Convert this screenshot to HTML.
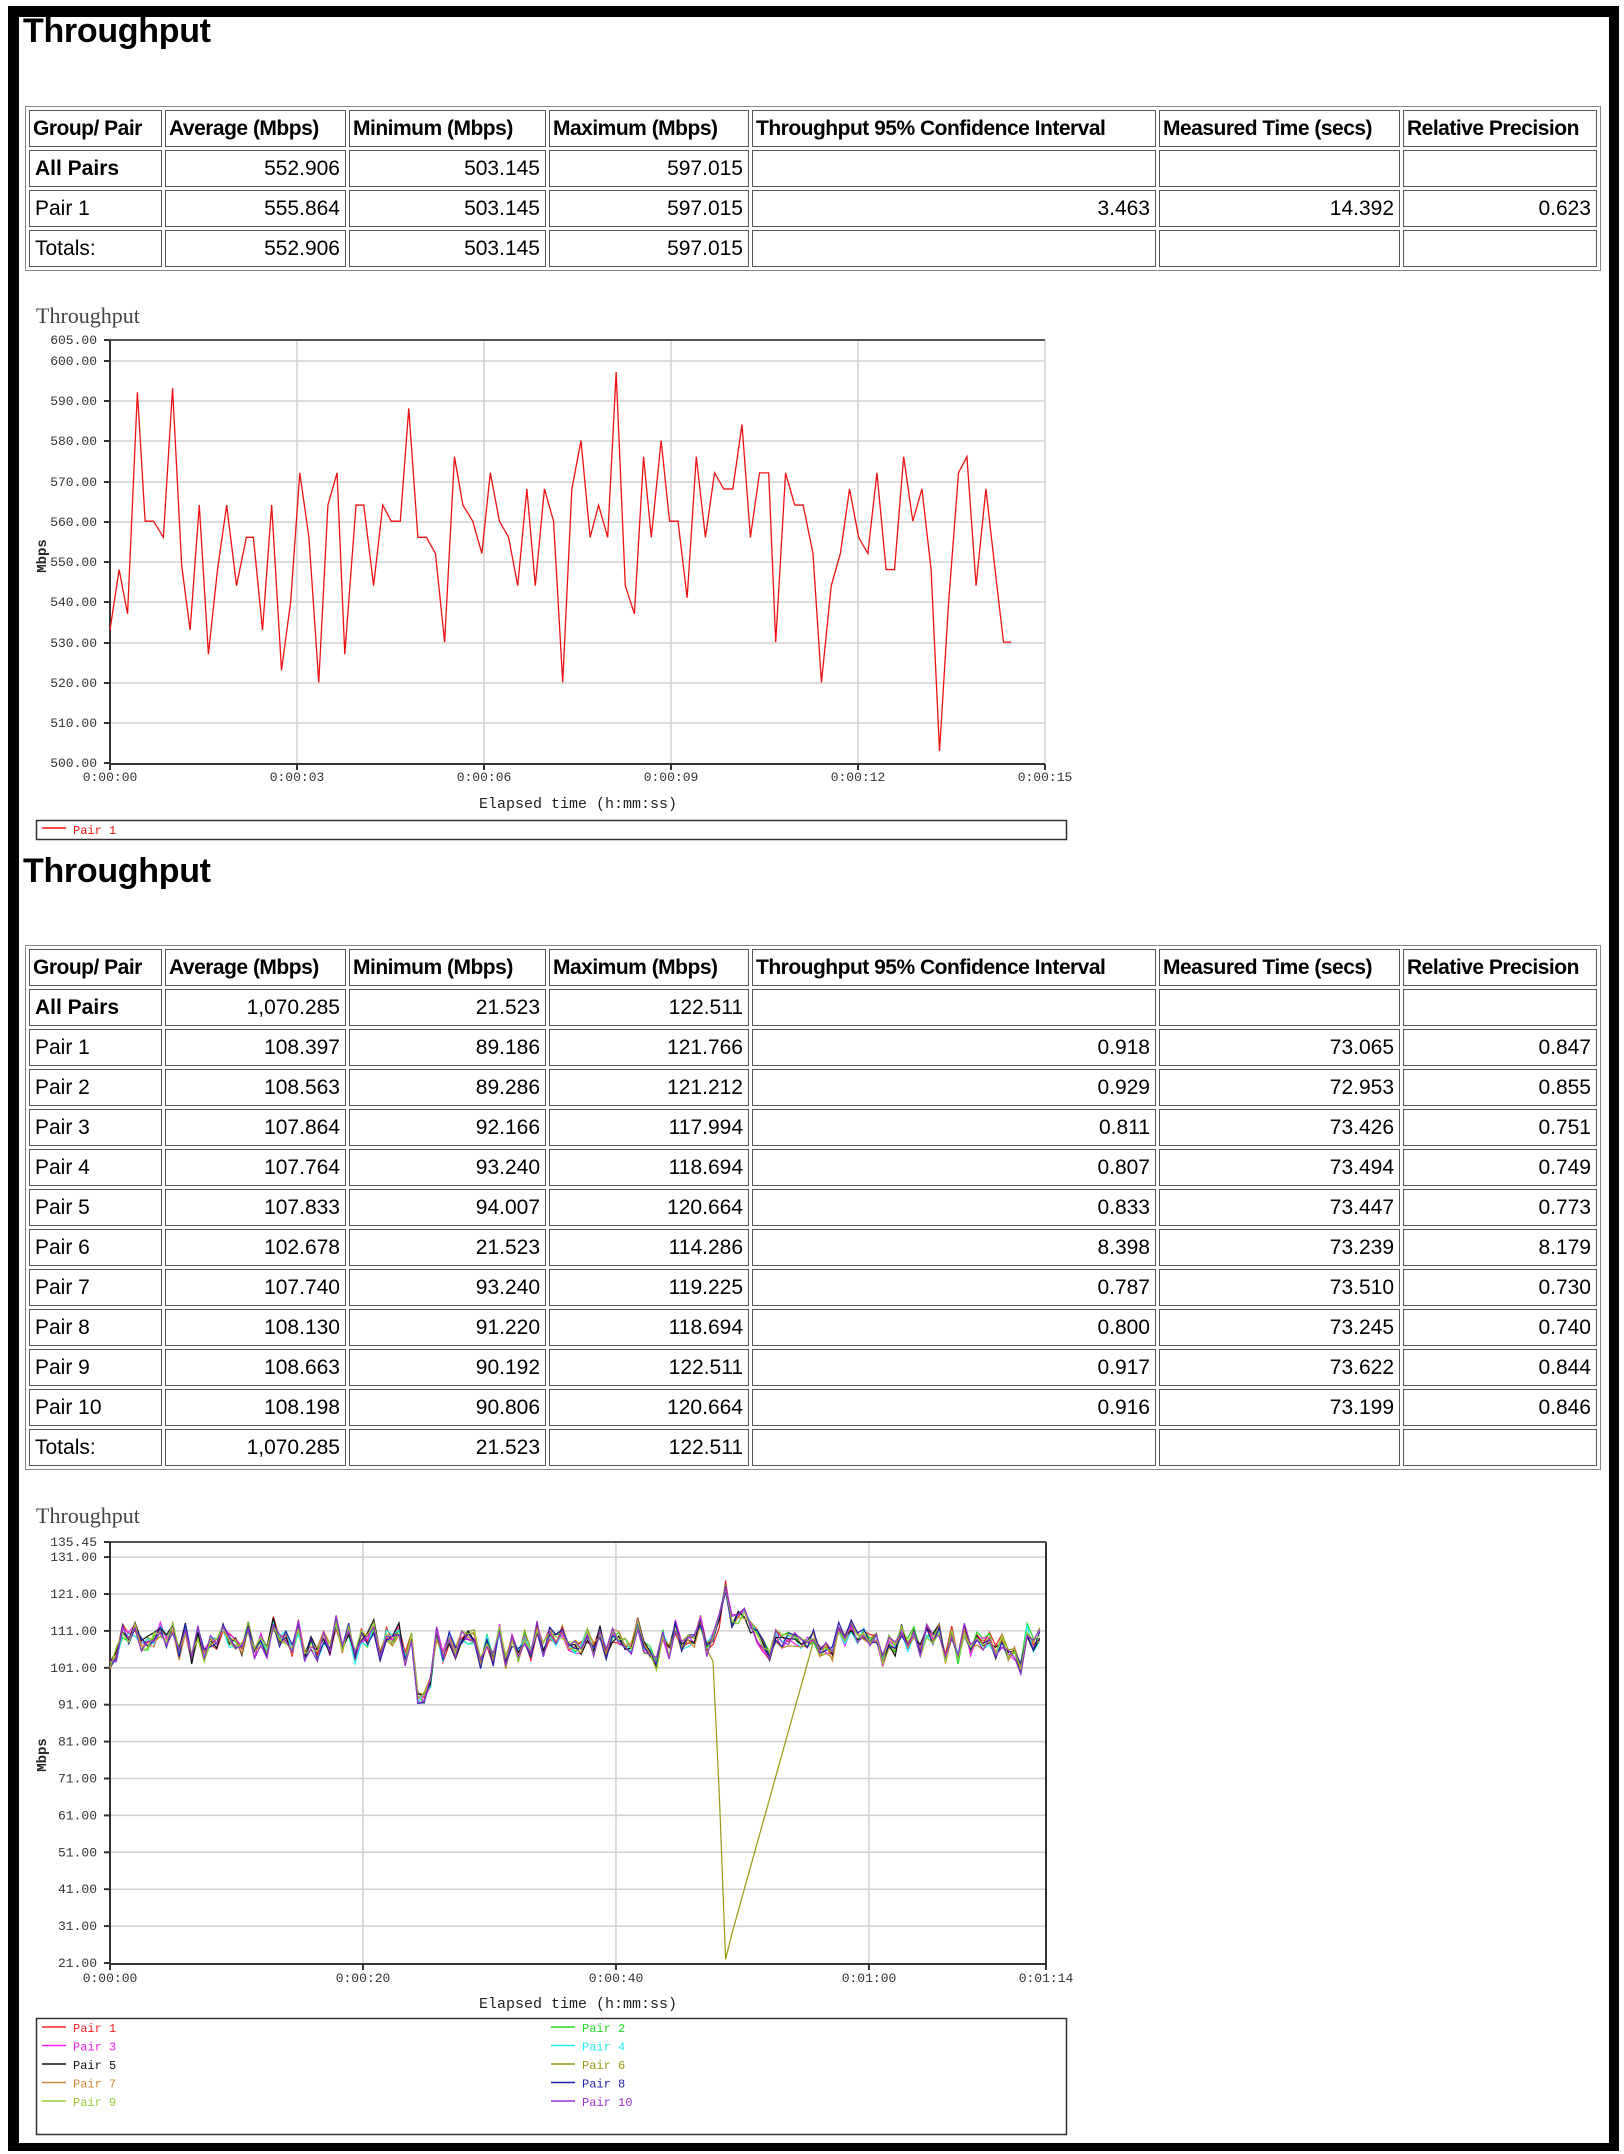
<!DOCTYPE html>
<html><head><meta charset="utf-8">
<style>
html,body{margin:0;padding:0;background:#fff;}
body{width:1624px;height:2154px;position:relative;overflow:hidden;font-family:"Liberation Sans",sans-serif;}
#frame{position:absolute;left:8px;top:6px;width:1590px;height:2126px;border:11px solid #000;border-right-width:10px;border-bottom-width:8px;}
h1{position:absolute;left:23px;margin:0;font-size:34px;font-weight:bold;line-height:40px;letter-spacing:-0.3px;}
table{position:absolute;left:25px;width:1576px;border-collapse:separate;border-spacing:3px;border:1px solid #888;table-layout:fixed;box-sizing:border-box;}
td,th{box-sizing:border-box;border:1px solid #555;height:37px;padding:0 5px;font-size:21px;white-space:nowrap;overflow:hidden;color:#000;}
th{font-size:21px;text-align:left;letter-spacing:-0.5px;padding:0 3px;}
td{text-align:right;}
td.l{text-align:left;}
td.b{font-weight:bold;}
svg{position:absolute;left:0;top:0;}
</style></head><body>
<div id="frame"></div>
<h1 style="top:11px">Throughput</h1>
<table style="top:106px">
<colgroup><col style="width:133px"><col style="width:181px"><col style="width:197px"><col style="width:200px"><col style="width:404px"><col style="width:241px"><col style="width:194px"></colgroup>
<tr><th>Group/ Pair</th><th>Average (Mbps)</th><th>Minimum (Mbps)</th><th>Maximum (Mbps)</th><th>Throughput 95% Confidence Interval</th><th>Measured Time (secs)</th><th>Relative Precision</th></tr>
<tr><td class="l b">All Pairs</td><td>552.906</td><td>503.145</td><td>597.015</td><td></td><td></td><td></td></tr>
<tr><td class="l">Pair 1</td><td>555.864</td><td>503.145</td><td>597.015</td><td>3.463</td><td>14.392</td><td>0.623</td></tr>
<tr><td class="l">Totals:</td><td>552.906</td><td>503.145</td><td>597.015</td><td></td><td></td><td></td></tr>
</table>

<h1 style="top:851px">Throughput</h1>
<table style="top:945px">
<colgroup><col style="width:133px"><col style="width:181px"><col style="width:197px"><col style="width:200px"><col style="width:404px"><col style="width:241px"><col style="width:194px"></colgroup>
<tr><th>Group/ Pair</th><th>Average (Mbps)</th><th>Minimum (Mbps)</th><th>Maximum (Mbps)</th><th>Throughput 95% Confidence Interval</th><th>Measured Time (secs)</th><th>Relative Precision</th></tr>
<tr><td class="l b">All Pairs</td><td>1,070.285</td><td>21.523</td><td>122.511</td><td></td><td></td><td></td></tr>
<tr><td class="l">Pair 1</td><td>108.397</td><td>89.186</td><td>121.766</td><td>0.918</td><td>73.065</td><td>0.847</td></tr>
<tr><td class="l">Pair 2</td><td>108.563</td><td>89.286</td><td>121.212</td><td>0.929</td><td>72.953</td><td>0.855</td></tr>
<tr><td class="l">Pair 3</td><td>107.864</td><td>92.166</td><td>117.994</td><td>0.811</td><td>73.426</td><td>0.751</td></tr>
<tr><td class="l">Pair 4</td><td>107.764</td><td>93.240</td><td>118.694</td><td>0.807</td><td>73.494</td><td>0.749</td></tr>
<tr><td class="l">Pair 5</td><td>107.833</td><td>94.007</td><td>120.664</td><td>0.833</td><td>73.447</td><td>0.773</td></tr>
<tr><td class="l">Pair 6</td><td>102.678</td><td>21.523</td><td>114.286</td><td>8.398</td><td>73.239</td><td>8.179</td></tr>
<tr><td class="l">Pair 7</td><td>107.740</td><td>93.240</td><td>119.225</td><td>0.787</td><td>73.510</td><td>0.730</td></tr>
<tr><td class="l">Pair 8</td><td>108.130</td><td>91.220</td><td>118.694</td><td>0.800</td><td>73.245</td><td>0.740</td></tr>
<tr><td class="l">Pair 9</td><td>108.663</td><td>90.192</td><td>122.511</td><td>0.917</td><td>73.622</td><td>0.844</td></tr>
<tr><td class="l">Pair 10</td><td>108.198</td><td>90.806</td><td>120.664</td><td>0.916</td><td>73.199</td><td>0.846</td></tr>
<tr><td class="l">Totals:</td><td>1,070.285</td><td>21.523</td><td>122.511</td><td></td><td></td><td></td></tr>
</table>

<svg id="sv" width="1624" height="2154" viewBox="0 0 1624 2154" font-family="'Liberation Mono',monospace" font-size="13" fill="#333">
<text x="36" y="323" font-family="'Liberation Serif',serif" font-size="22" fill="#444">Throughput</text>
<g stroke="#d0d0d0" stroke-width="1.5">
<line x1="110" y1="361" x2="1045" y2="361"/><line x1="110" y1="401" x2="1045" y2="401"/><line x1="110" y1="441" x2="1045" y2="441"/><line x1="110" y1="482" x2="1045" y2="482"/><line x1="110" y1="522" x2="1045" y2="522"/><line x1="110" y1="562" x2="1045" y2="562"/><line x1="110" y1="602" x2="1045" y2="602"/><line x1="110" y1="643" x2="1045" y2="643"/><line x1="110" y1="683" x2="1045" y2="683"/><line x1="110" y1="723" x2="1045" y2="723"/>
<line x1="297" y1="340" x2="297" y2="763"/><line x1="484" y1="340" x2="484" y2="763"/><line x1="671" y1="340" x2="671" y2="763"/><line x1="858" y1="340" x2="858" y2="763"/><line x1="1045" y1="340" x2="1045" y2="763"/>
</g>
<polyline fill="none" stroke="#555" stroke-width="2" points="110,340 1045,340"/>
<polyline fill="none" stroke="#333" stroke-width="2" points="110,340 110,764 1045,764"/>
<g stroke="#333" stroke-width="2"><line x1="104" y1="340" x2="110" y2="340"/><line x1="104" y1="361" x2="110" y2="361"/><line x1="104" y1="401" x2="110" y2="401"/><line x1="104" y1="441" x2="110" y2="441"/><line x1="104" y1="482" x2="110" y2="482"/><line x1="104" y1="522" x2="110" y2="522"/><line x1="104" y1="562" x2="110" y2="562"/><line x1="104" y1="602" x2="110" y2="602"/><line x1="104" y1="643" x2="110" y2="643"/><line x1="104" y1="683" x2="110" y2="683"/><line x1="104" y1="723" x2="110" y2="723"/><line x1="104" y1="763" x2="110" y2="763"/>
<line x1="110" y1="764" x2="110" y2="770"/><line x1="297" y1="764" x2="297" y2="770"/><line x1="484" y1="764" x2="484" y2="770"/><line x1="671" y1="764" x2="671" y2="770"/><line x1="858" y1="764" x2="858" y2="770"/><line x1="1045" y1="764" x2="1045" y2="770"/></g>
<g text-anchor="end"><text x="97" y="344">605.00</text><text x="97" y="365">600.00</text><text x="97" y="405">590.00</text><text x="97" y="445">580.00</text><text x="97" y="486">570.00</text><text x="97" y="526">560.00</text><text x="97" y="566">550.00</text><text x="97" y="606">540.00</text><text x="97" y="647">530.00</text><text x="97" y="687">520.00</text><text x="97" y="727">510.00</text><text x="97" y="767">500.00</text></g>
<g text-anchor="middle"><text x="110" y="781">0:00:00</text><text x="297" y="781">0:00:03</text><text x="484" y="781">0:00:06</text><text x="671" y="781">0:00:09</text><text x="858" y="781">0:00:12</text><text x="1045" y="781">0:00:15</text>
<text x="578" y="808" font-size="15" fill="#222">Elapsed time (h:mm:ss)</text></g>
<text transform="translate(46,556) rotate(-90)" text-anchor="middle" font-size="14" font-weight="bold" fill="#222">Mbps</text>
<g transform="matrix(0.703 0 0 -4.03 -2.5 2778)">
<polyline fill="none" stroke="#ee1111" stroke-width="1.3" vector-effect="non-scaling-stroke" points="160,533 173,548 185,537 199,592 210,560 222,560 236,556 249,593 262,549 274,533 287,564 300,527 313,548 326,564 340,544 354,556 364,556 377,533 390,564 404,523 417,540 430,572 443,556 457,520 470,564 483,572 494,527 510,564 521,564 535,544 548,564 560,560 573,560 585,588 598,556 610,556 623,552 636,530 650,576 662,564 676,560 689,552 701,572 714,560 727,556 740,544 753,568 765,544 778,568 791,560 804,520 817,568 830,580 843,556 855,564 868,556 880,597 893,544 906,537 919,576 930,556 944,580 956,560 968,560 981,541 994,576 1007,556 1020,572 1033,568 1046,568 1059,584 1071,556 1084,572 1097,572 1107,530 1121,572 1134,564 1146,564 1160,552 1172,520 1186,544 1199,552 1212,568 1225,556 1238,552 1251,572 1264,548 1276,548 1289,576 1302,560 1315,568 1328,548 1340,503 1353,540 1367,572 1379,576 1392,544 1406,568 1419,548 1431,530 1442,530"/>
</g>
<rect x="36.5" y="820.5" width="1030" height="19" fill="none" stroke="#333" stroke-width="1.5"/>
<line x1="42" y1="828" x2="66" y2="828" stroke="#ee1111" stroke-width="1.5"/>
<text x="73" y="834" font-size="12" fill="#ee1111">Pair 1</text>

<text x="36" y="1523" font-family="'Liberation Serif',serif" font-size="22" fill="#444">Throughput</text>
<g id="grid2" stroke="#d0d0d0" stroke-width="1.5"></g>
<polyline fill="none" stroke="#555" stroke-width="2" points="110,1542 1046,1542"/>
<polyline fill="none" stroke="#333" stroke-width="2" points="110,1542 110,1964 1046,1964 1046,1542"/>
<g id="ticks2" stroke="#333" stroke-width="2"></g>
<g id="lab2" text-anchor="end"></g>
<g text-anchor="middle"><text x="110" y="1982">0:00:00</text><text x="363" y="1982">0:00:20</text><text x="616" y="1982">0:00:40</text><text x="869" y="1982">0:01:00</text><text x="1046" y="1982">0:01:14</text>
<text x="578" y="2008" font-size="15" fill="#222">Elapsed time (h:mm:ss)</text></g>
<text transform="translate(46,1755) rotate(-90)" text-anchor="middle" font-size="14" font-weight="bold" fill="#222">Mbps</text>
<g id="lines2"></g>
<rect x="36.5" y="2018.5" width="1030" height="116" fill="none" stroke="#333" stroke-width="1.5"/>
<g id="leg2" font-size="12"></g>
</svg>
<script>
(function(){
var NS="http://www.w3.org/2000/svg";
function el(p,t,a,txt){var e=document.createElementNS(NS,t);for(var k in a)e.setAttribute(k,a[k]);if(txt)e.textContent=txt;p.appendChild(e);return e;}
var Y=function(v){return 1963-3.69*(v-21);};
var X=function(t){return 110+t*936/74;};
var grid=document.getElementById('grid2'),ticks=document.getElementById('ticks2'),lab=document.getElementById('lab2');
for(var v=21;v<=131;v+=10){var y=Y(v);if(v>21)el(grid,'line',{x1:110,y1:y,x2:1046,y2:y});el(ticks,'line',{x1:104,y1:y,x2:110,y2:y});el(lab,'text',{x:97,y:y+4},v.toFixed(2));}
el(ticks,'line',{x1:104,y1:1542,x2:110,y2:1542});el(lab,'text',{x:97,y:1546},'135.45');
[20,40,60].forEach(function(t){el(grid,'line',{x1:X(t),y1:1542,x2:X(t),y2:1963});});
[0,20,40,60,74].forEach(function(t){el(ticks,'line',{x1:X(t),y1:1964,x2:X(t),y2:1970});});
var s=12345;function r(){s=(s*1103515245+12345)%2147483648;return s/2147483648;}
var N=148,base=[];
for(var i=0;i<=N;i++){var t=i*73.5/N;var b=108+(r()-0.5)*7;
 if(i%2==0)b+=2;else b-=2;
 b+=-18*Math.exp(-Math.pow((t-24.8)/0.6,2));
 b+=12*Math.exp(-Math.pow((t-48.6)/0.6,2))+8*Math.exp(-Math.pow((t-50.2)/0.6,2));
 b+=-5*Math.exp(-Math.pow((t-43.2)/0.4,2))-6*Math.exp(-Math.pow((t-72)/0.5,2));
 if(t<0.3)b=101;
 base.push(b);}
var cols=['#ee2222','#22dd22','#ee22ee','#22eeee','#111111','#999911','#cc8833','#2222aa','#99cc33','#9933cc'];
var g=document.getElementById('lines2');
var order=[5,0,1,2,3,4,6,7,8,9];
order.forEach(function(k){var pts=[];for(var i=0;i<=N;i++){var t=i*73.5/N;var v=base[i]+(r()-0.5)*4;
 if(k==5){if(t>47.6&&t<=48.6)v=base[i]-(t-47.6)*82; if(t>48.6&&t<55.2)v=22+(t-48.6)*(103-22)/6.6; if(t>48.6&&t<49)v=22;}
 pts.push(X(t).toFixed(1)+','+Y(v).toFixed(1));}
 el(g,'polyline',{fill:'none',stroke:cols[k],'stroke-width':1.2,points:pts.join(' ')});});
var leg=document.getElementById('leg2');
for(var k=0;k<10;k++){var cx=(k%2==0)?42:551,cy=2027+Math.floor(k/2)*18.5;
 el(leg,'line',{x1:cx,y1:cy,x2:cx+24,y2:cy,stroke:cols[k],'stroke-width':1.5});
 el(leg,'text',{x:cx+31,y:cy+5,fill:cols[k]},'Pair '+(k+1));}
})();
</script>
</body></html>
